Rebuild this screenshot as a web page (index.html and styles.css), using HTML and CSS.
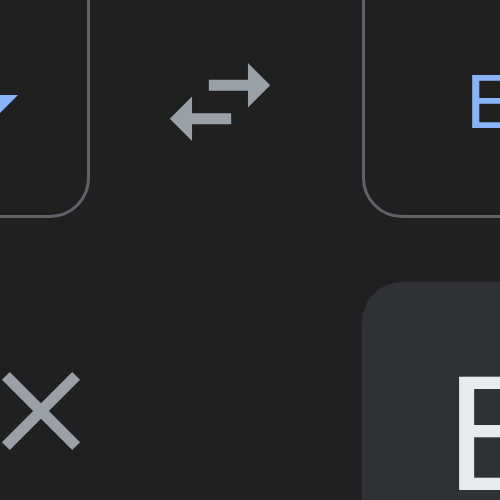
FILE: index.html
```html
<!DOCTYPE html>
<html lang="en">

<head>
  <meta charset="UTF-8">
  <meta name="viewport" content="width=device-width, initial-scale=1.0">
  <title>Translate</title>
  <link rel="stylesheet" href="styles.css">
</head>

<body>
  <div class="page">
    <div class="lang-row">
      <div class="lang-box source">
        <svg class="drop-arrow" viewBox="0 0 44 22" width="44" height="22">
          <path d="M0 0h44L22 22z" fill="#8ab4f8" />
        </svg>
      </div>

      <svg class="swap-icon" viewBox="0 0 24 24" width="134" height="134">
        <path d="M6.99 11L3 15l3.99 4v-3H14v-2H6.99v-3zM21 9l-3.99-4v3H10v2h7.01v3L21 9z" fill="#9aa0a6" />
      </svg>

      <div class="lang-box target">
        <span class="lang-name">English</span>
      </div>
    </div>

    <div class="text-row">
      <svg class="clear-icon" viewBox="0 0 24 24" width="134" height="134">
        <path d="M19 6.41L17.59 5 12 10.59 6.41 5 5 6.41 10.59 12 5 17.59 6.41 19 12 13.41 17.59 19 19 17.59 13.41 12z" fill="#9aa0a6" />
      </svg>

      <div class="result-panel">
        <span class="result-text">English</span>
      </div>
    </div>
  </div>
</body>

</html>
```

FILE: styles.css
```css
html,
body {
  margin: 0;
  padding: 0;
  background-color: #202020;
}

body {
  font-family: Roboto, 'Noto Sans', sans-serif;
  width: 500px;
  height: 500px;
  overflow: hidden;
}

.page {
  width: 500px;
  height: 500px;
  overflow: hidden;
}

.lang-row {
  display: flex;
  align-items: flex-start;
  margin-top: -42px;
}

.lang-box {
  flex: none;
  height: 260px;
  box-sizing: border-box;
  border: 3px solid #5f6368;
  border-radius: 40px;
}

.source {
  width: 300px;
  margin-left: -210px;
  display: flex;
  justify-content: flex-end;
  align-items: flex-start;
  padding: 134px 69px 0 0;
}

.drop-arrow {
  display: block;
}

.swap-icon {
  flex: none;
  display: block;
  margin-left: 63px;
  margin-top: 77px;
}

.target {
  width: 400px;
  margin-left: 75px;
  padding: 104px 0 0 101px;
  overflow: hidden;
}

.lang-name {
  display: block;
  font-size: 75px;
  line-height: 1;
  color: #8ab4f8;
  white-space: nowrap;
}

.text-row {
  display: flex;
  align-items: flex-start;
  margin-top: 64px;
}

.clear-icon {
  flex: none;
  display: block;
  margin-left: -26px;
  margin-top: 62px;
}

.result-panel {
  flex: none;
  width: 300px;
  height: 300px;
  box-sizing: border-box;
  margin-left: 254px;
  padding: 74px 0 0 84px;
  background-color: #303134;
  border-radius: 40px 0 0 0;
  overflow: hidden;
}

.result-text {
  display: block;
  font-size: 159px;
  line-height: 1;
  color: #e8eaed;
  white-space: nowrap;
}
```
